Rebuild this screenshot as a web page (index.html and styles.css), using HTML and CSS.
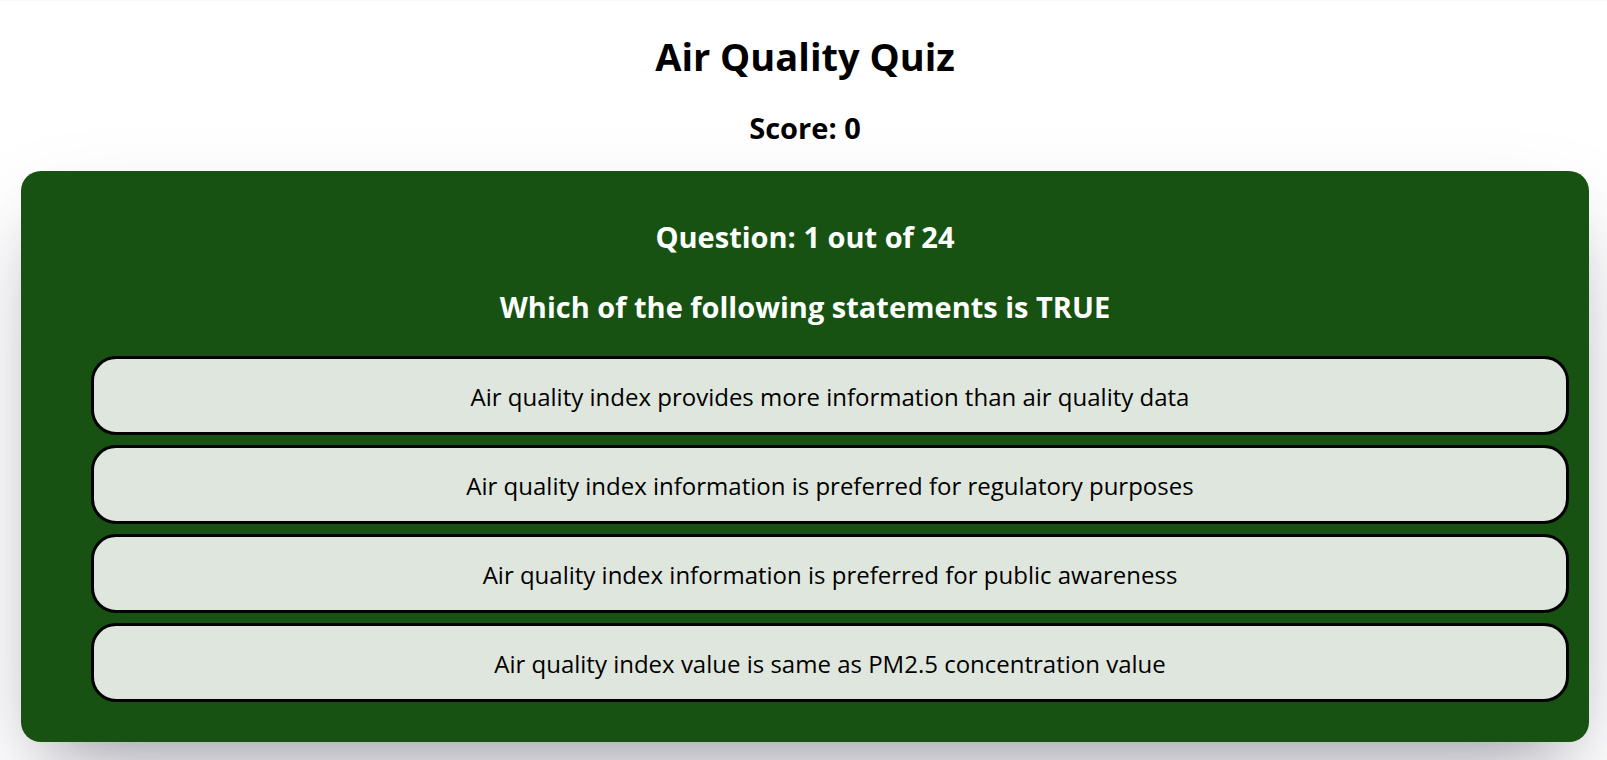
FILE: index.html
```html
<!DOCTYPE html>
<html lang="en">
<head>
<meta charset="utf-8">
<title>Air Quality Quiz</title>
<link rel="stylesheet" href="styles.css">
</head>
<body class="page">
<main class="quiz">
  <h1 class="quiz-title">Air Quality Quiz</h1>
  <h2 class="quiz-score">Score: 0</h2>
  <section class="question-card">
    <h2 class="question-count">Question: 1 out of 24</h2>
    <h3 class="question-text">Which of the following statements is TRUE</h3>
    <ul class="options">
      <li><button class="option" type="button">Air quality index provides more information than air quality data</button></li>
      <li><button class="option" type="button">Air quality index information is preferred for regulatory purposes</button></li>
      <li><button class="option" type="button">Air quality index information is preferred for public awareness</button></li>
      <li><button class="option" type="button">Air quality index value is same as PM2.5 concentration value</button></li>
    </ul>
  </section>
</main>
</body>
</html>
```
FILE: styles.css
```css
* {
  box-sizing: border-box;
}

.page {
  margin: 0;
  overflow: hidden;
  border-top: 1px solid #f8f8f8;
  background: #fff;
  color: #000;
  font-family: "Segoe UI", "Open Sans", "Noto Sans", sans-serif;
  text-align: center;
}

.quiz {
  padding: 28px 18px 18px 21px;
}

.quiz-title {
  margin: 0 0 25px;
  font-size: 38px;
  line-height: 54px;
}

.quiz-score,
.question-count,
.question-text {
  margin: 0;
  font-size: 29px;
  line-height: 40px;
}

.quiz-score {
  margin-bottom: 23px;
}

.question-card {
  padding: 46px 20px 40px;
  border-radius: 20px;
  background: #175212;
  color: #fff;
  box-shadow: rgba(50, 50, 93, 0.25) 0 50px 100px -20px, rgba(0, 0, 0, 0.3) 0 30px 60px -30px;
}

.question-count {
  margin-bottom: 30px;
}

.question-text {
  margin-bottom: 29px;
}

.options {
  display: grid;
  gap: 10px;
  margin: 0;
  padding: 0 0 0 50px;
  list-style: none;
}

.option {
  display: block;
  width: 100%;
  padding: 21px 20px 19px;
  border: 3px solid #000;
  border-radius: 25px;
  background: #dfe6de;
  color: #000;
  font-family: inherit;
  font-size: 24px;
  line-height: 33px;
  cursor: pointer;
}
```
